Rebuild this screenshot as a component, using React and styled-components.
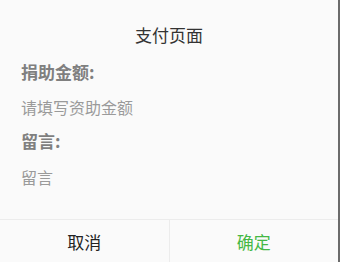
import React from 'react';
import styled, { createGlobalStyle } from 'styled-components';

const GlobalStyle = createGlobalStyle`
  html, body {
    margin: 0;
    padding: 0;
    background: #fafafa;
  }
  body {
    font-family: "Noto Sans CJK SC", "Noto Sans", sans-serif;
  }
`;

const Page = styled.div`
  width: 338px;
  height: 262px;
  border-right: 2px solid #6b6b6b;
  background: #fafafa;
  display: flex;
  flex-direction: column;
`;

const Title = styled.h1`
  margin: 0;
  padding-top: 25px;
  font-size: 17px;
  line-height: 20px;
  font-weight: 400;
  color: #333;
  text-align: center;
`;

const Form = styled.div`
  flex: 1;
  padding: 0 21px;
  display: flex;
  flex-direction: column;
`;

const Label = styled.div`
  margin-top: ${(props) => props.gap}px;
  font-size: 17px;
  line-height: 20px;
  font-weight: 700;
  color: #7f7f7f;
`;

const Field = styled.input`
  margin-top: ${(props) => props.gap}px;
  padding: 0;
  border: 0;
  outline: none;
  background: transparent;
  font-family: inherit;
  font-size: 16px;
  line-height: 20px;
  height: 20px;
  color: #333;

  &::placeholder {
    color: #9a9a9a;
  }
`;

const Footer = styled.div`
  height: 42px;
  border-top: 1px solid #ececec;
  display: flex;
`;

const Button = styled.button`
  flex: 1;
  border: 0;
  border-left: ${(props) => (props.divided ? '1px solid #ececec' : '0')};
  background: transparent;
  font-family: inherit;
  font-size: 17px;
  color: ${(props) => (props.primary ? '#45b845' : '#222')};
  padding: 0;
  cursor: pointer;
`;

const App = () => (
  <>
    <GlobalStyle />
    <Page>
      <Title>支付页面</Title>
      <Form>
        <Label gap={17}>捐助金额:</Label>
        <Field gap={15} placeholder="请填写资助金额" />
        <Label gap={14}>留言:</Label>
        <Field gap={16} placeholder="留言" />
      </Form>
      <Footer>
        <Button type="button">取消</Button>
        <Button type="button" primary divided>确定</Button>
      </Footer>
    </Page>
  </>
);

export default App;
